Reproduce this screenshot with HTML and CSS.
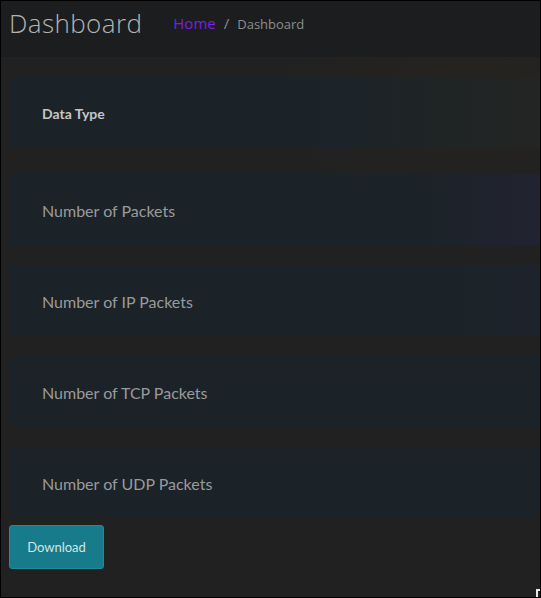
FILE: index.html
```html
<!DOCTYPE html>
<html lang="en">
<head>
<meta charset="utf-8">
<title>Dashboard</title>
<link rel="stylesheet" href="styles.css">
</head>
<body>
<div class="frame">
  <header class="topbar">
    <h1 class="title">Dashboard</h1>
    <nav class="crumbs">
      <a class="crumb-link" href="#">Home</a>
      <span class="crumb-sep">/</span>
      <span class="crumb-current">Dashboard</span>
    </nav>
  </header>
  <main class="content">
    <div class="table">
      <div class="row row-head"><span class="cell-head">Data Type</span></div>
      <div class="row row-tint"><span class="cell">Number of Packets</span></div>
      <div class="row row-tint-soft"><span class="cell">Number of IP Packets</span></div>
      <div class="row"><span class="cell">Number of TCP Packets</span></div>
      <div class="row"><span class="cell">Number of UDP Packets</span></div>
    </div>
    <button class="btn-download" type="button">Download</button>
  </main>
  <span class="corner-mark"></span>
</div>
</body>
</html>
```
FILE: styles.css
```css
html, body {
  margin: 0;
  padding: 0;
  background: #000;
}
.frame {
  position: relative;
  box-sizing: border-box;
  width: 541px;
  height: 598px;
  border: 1px solid #000;
  overflow: hidden;
  display: flex;
  flex-direction: column;
  background:
    radial-gradient(ellipse 200px 110px at 470px 100px, rgba(60, 50, 30, 0.18), rgba(0,0,0,0) 100%),
    #212121;
  font-family: "Lato", "Liberation Sans", sans-serif;
}
.topbar {
  height: 56px;
  flex: none;
  background: #1c1d1f;
  display: flex;
  align-items: center;
  padding: 0 0 0 8px;
  gap: 31px;
}
.title {
  margin: 0;
  font-family: "Open Sans", "Liberation Sans", sans-serif;
  font-weight: 300;
  font-size: 26px;
  letter-spacing: 0.4px;
  color: #b4b4b4;
  line-height: 1;
  position: relative;
  top: -6px;
}
.crumbs {
  display: flex;
  align-items: baseline;
  gap: 8px;
  font-family: "Open Sans", "Liberation Sans", sans-serif;
  position: relative;
  top: -6px;
}
.crumb-link {
  color: #7b1fe4;
  text-decoration: none;
  font-size: 15px;
}
.crumb-sep {
  color: #8b8b8b;
  font-size: 15px;
}
.crumb-current {
  color: #8d8d8d;
  font-size: 13px;
}
.content {
  flex: 1;
  padding: 21px 0 0 8px;
  display: flex;
  flex-direction: column;
  align-items: flex-start;
}
.table {
  display: flex;
  flex-direction: column;
  gap: 20px;
  width: 560px;
  margin-left: 1px;
}
.row {
  height: 71px;
  display: flex;
  align-items: center;
  padding-left: 32px;
  background: #1b2329;
}
.row-head {
  margin-bottom: 6px;
  height: 70px;
  background:
    linear-gradient(90deg, rgba(0,0,0,0) 55%, rgba(38, 38, 32, 0.8) 100%),
    #1b2329;
}
.row-tint {
  background:
    linear-gradient(90deg, rgba(0,0,0,0) 75%, rgba(42, 34, 56, 0.6) 100%),
    #1b2329;
}
.row-tint-soft {
  background:
    linear-gradient(90deg, rgba(0,0,0,0) 80%, rgba(40, 34, 52, 0.3) 100%),
    #1b2329;
}
.cell-head {
  font-weight: 700;
  font-size: 14px;
  color: #c6c6c6;
}
.cell {
  font-size: 16px;
  color: #9a9a9a;
  position: relative;
  top: 1px;
}
.btn-download {
  margin-top: 7px;
  width: 95px;
  height: 44px;
  background: #177b8b;
  border: 1px solid #1a8d9e;
  border-radius: 3px;
  color: #d4e4e8;
  font-family: "Lato", "Liberation Sans", sans-serif;
  font-size: 13px;
  padding: 0;
}
.corner-mark {
  position: absolute;
  right: 0;
  bottom: 0;
  width: 4px;
  height: 8px;
  border-top: 2px solid #e8e8e8;
  border-left: 2px solid #e8e8e8;
  box-sizing: border-box;
}
```
